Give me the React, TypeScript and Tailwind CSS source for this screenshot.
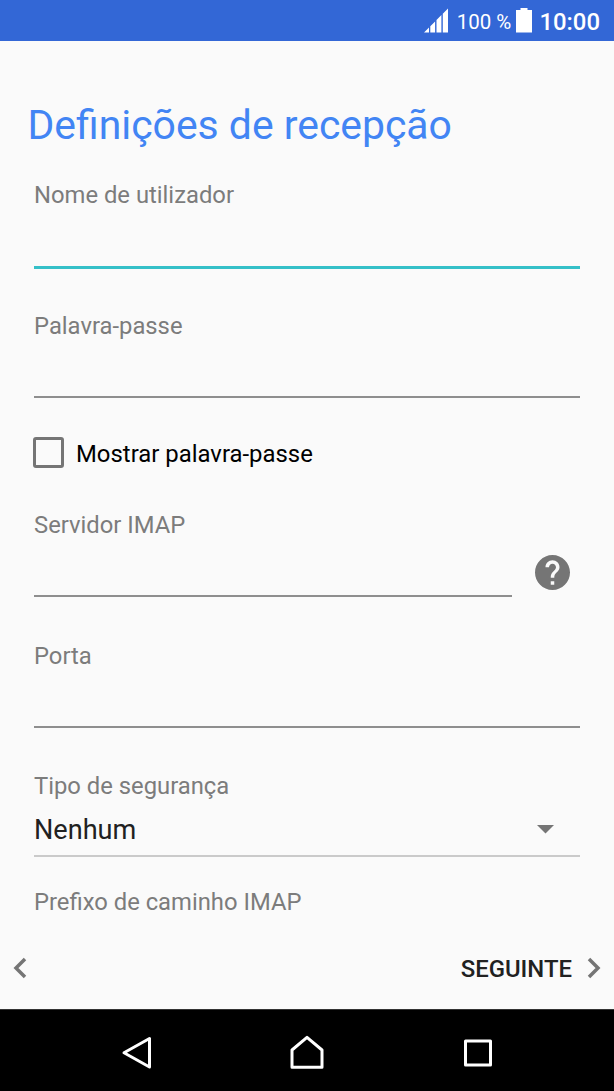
import React from 'react';

type FieldProps = {
  label: string;
  className?: string;
  active?: boolean;
};

const Label = ({ children }: { children: React.ReactNode }) => (
  <span className="block h-7 text-[23.8px] leading-7 text-[#7c7c7c] whitespace-nowrap">{children}</span>
);

const Field = ({ label, className = '', active = false }: FieldProps) => (
  <label className={`block ${className}`}>
    <Label>{label}</Label>
    <span
      className={
        active
          ? 'block h-[60px] border-b-[3px] border-[#35c0c8]'
          : 'block h-[58px] border-b-2 border-[#8e8e8e]'
      }
    />
  </label>
);

const StatusBar = () => (
  <header className="flex h-[41px] shrink-0 items-center justify-end bg-[#3367d6] pr-[14px] text-white">
    <svg width="24" height="25" viewBox="0 0 24 25" fill="currentColor" className="mr-[9px]">
      <path d="M0 24.5L5 19.5V24.5zM6.3 24.5V18.2L11.1 13.4V24.5zM12.5 24.5V12L17.4 7.1V24.5zM18.8 24.5V5.7L24 0.5V24.5z" />
    </svg>
    <span className="pt-0.5 text-[20.5px] leading-7 whitespace-nowrap">100 %</span>
    <svg width="16" height="25" viewBox="0 0 16 25" fill="currentColor" className="mr-[7px] ml-[5px]">
      <path d="M0 2H4.5V0H11.5V2H16V24.5H0z" />
    </svg>
    <span className="pt-0.5 text-[23.9px] leading-7 font-medium">10:00</span>
  </header>
);

const NavBar = () => (
  <nav className="h-[82px] shrink-0 border-t border-[#333333] bg-black text-white">
    <svg width="614" height="81" viewBox="0 1010 614 81" fill="none" stroke="currentColor" strokeWidth="3" strokeLinejoin="round">
      <path d="M149.5 1038.5V1067L124 1052.7z" />
      <path d="M292 1067.2V1050L307 1037.3L322 1050V1067.2z" />
      <rect x="465.5" y="1041" width="25" height="24" />
    </svg>
  </nav>
);

const App = () => {
  return (
    <div className="flex h-[1091px] w-[614px] flex-col overflow-hidden bg-[#fafafa] font-['Roboto',sans-serif]">
      <StatusBar />

      <main className="flex-1 pr-[34px] pl-[34px]">
        <h1 className="-ml-[6.5px] pt-[60px] text-[40.9px] leading-[48px] text-[#4285f4] whitespace-nowrap">
          Definições de recepção
        </h1>

        <Field label="Nome de utilizador" active className="mt-8" />
        <Field label="Palavra-passe" className="mt-[43px]" />

        {/* Show password */}
        <div className="mt-[39px] flex h-[31px] items-center">
          <span className="-ml-px h-[31px] w-[31px] rounded-[3px] border-[3px] border-[#757575]" />
          <span className="ml-3 pt-0.5 text-[23.9px] leading-7 text-black whitespace-nowrap">Mostrar palavra-passe</span>
        </div>

        <div className="mt-[43px] flex items-end">
          <Field label="Servidor IMAP" className="w-[478px]" />
          <svg width="35" height="35" viewBox="2 2 20 20" fill="#757575" className="mb-[7px] ml-[23px]">
            <path d="M12 2C6.48 2 2 6.48 2 12s4.48 10 10 10 10-4.48 10-10S17.52 2 12 2zm1 17h-2v-2h2v2zm2.07-7.75l-.9.92C13.45 12.9 13 13.5 13 15h-2v-.5c0-1.1.45-2.1 1.17-2.83l1.24-1.26c.37-.36.59-.86.59-1.41 0-1.1-.9-2-2-2s-2 .9-2 2H8c0-2.21 1.79-4 4-4s4 1.79 4 4c0 .88-.36 1.68-.93 2.25z" />
          </svg>
        </div>

        <Field label="Porta" className="mt-[45px]" />

        {/* Security type */}
        <div className="mt-[44px]">
          <Label>Tipo de segurança</Label>
          <div className="flex h-[57px] items-center justify-between border-b-2 border-[#cacaca] pt-[3px] pr-[26px]">
            <span className="pt-0.5 text-[27.1px] leading-8 text-[#212121]">Nenhum</span>
            <svg width="17" height="9" viewBox="0 0 17 9" fill="#757575">
              <path d="M0 0H17L8.5 8.5z" />
            </svg>
          </div>
        </div>

        <div className="mt-[31px]">
          <Label>Prefixo de caminho IMAP</Label>
        </div>
      </main>

      <footer className="flex h-[81px] shrink-0 items-center justify-between pr-[13px] pl-[13px]">
        <svg width="14" height="22" viewBox="0 0 14 22" fill="none" stroke="#757575" strokeWidth="3.5" className="mb-px">
          <path d="M12 2L3 11L12 20" />
        </svg>
        <div className="flex items-center">
          <span className="text-[23.9px] leading-7 font-medium text-[#212121]">SEGUINTE</span>
          <svg width="14" height="22" viewBox="0 0 14 22" fill="none" stroke="#757575" strokeWidth="3.5" className="mb-px ml-[15px]">
            <path d="M2 2L11 11L2 20" />
          </svg>
        </div>
      </footer>

      <NavBar />
    </div>
  );
};

export default App;
